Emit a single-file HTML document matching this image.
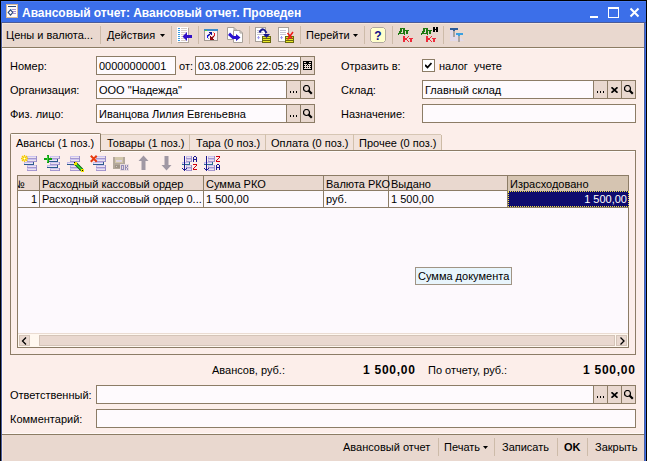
<!DOCTYPE html>
<html><head><meta charset="utf-8">
<style>
*{margin:0;padding:0;box-sizing:border-box}
html,body{width:647px;height:461px;overflow:hidden;background:#FCEEEA}
body{position:relative;font-family:"Liberation Sans",sans-serif;font-size:11px;color:#000}
.a{position:absolute}
.t{position:absolute;white-space:pre;line-height:13px;height:13px}
.fld{position:absolute;border:1px solid #8C7C66;background:#FEFAFD;height:19px}
.btn{position:absolute;border:1px solid #8C7C66;background:#E9D8CF;height:19px;width:15px}
.sep{position:absolute;width:1px;background:#CDBBA9;top:26px;height:18px}
.bsep{position:absolute;width:1px;background:#CDBBA9;top:438px;height:18px}
</style></head><body>
<!-- window frame -->
<div class="a" style="left:0;top:0;width:647px;height:461px;background:#000"></div>
<div class="a" style="left:1px;top:1px;width:645px;height:460px;background:#3C6FE9"></div>
<div class="a" style="left:1px;top:1px;width:645px;height:1px;background:#4A7CF2"></div>
<div class="a" style="left:1px;top:22px;width:645px;height:1px;background:#4A5A98"></div>
<div class="a" style="left:1px;top:22px;width:1px;height:439px;background:#4C5E9E"></div>
<div class="a" style="left:644px;top:22px;width:1px;height:439px;background:#4C5E9E"></div>
<!-- title icon -->
<svg class="a" style="left:6px;top:4px" width="12" height="14" viewBox="0 0 12 14">
<rect x="0.5" y="0.5" width="11" height="13" fill="#FFFAFA" stroke="#D6B898"/>
<rect x="2" y="2" width="8" height="1" fill="#2A4A7A"/>
<rect x="4" y="5" width="3" height="1" fill="#A0E4EC"/>
<rect x="6" y="5" width="4" height="1" fill="#A890D0"/>
<rect x="6" y="7" width="4" height="1" fill="#A890D0"/>
<rect x="7" y="9" width="3" height="1" fill="#A890D0"/>
<path d="M4.5 5.8 L6.8 8.5 L4.5 11.2 L2.2 8.5 Z" fill="none" stroke="#27457A" stroke-width="1.1"/>
</svg>
<div class="t" style="left:22px;top:6px;font-size:12px;font-weight:bold;color:#fff;line-height:14px;height:14px;letter-spacing:-0.03px">Авансовый отчет: Авансовый отчет. Проведен</div>
<!-- title buttons -->
<div class="a" style="left:590px;top:16px;width:8px;height:2px;background:#fff"></div>
<div class="a" style="left:608px;top:7px;width:11px;height:11px;border:1px solid #fff;border-top-width:2px"></div>
<svg class="a" style="left:629px;top:7px" width="11" height="11" viewBox="0 0 11 11"><path d="M1.5 1.5 L9.5 9.5 M9.5 1.5 L1.5 9.5" stroke="#fff" stroke-width="2"/></svg>

<!-- content bg -->
<div class="a" style="left:2px;top:23px;width:642px;height:438px;background:#FCEEEA"></div>
<!-- toolbar -->
<div class="a" style="left:2px;top:23px;width:642px;height:24px;background:#E9D8CF;border-top:1px solid #F6E6DA;border-left:1px solid #F4E6DC"></div>
<div class="a" style="left:2px;top:47px;width:642px;height:1px;background:#8C7C64"></div>
<div class="a" style="left:2px;top:48px;width:642px;height:1px;background:#FFF8F6"></div>
<div class="a" style="left:2px;top:48px;width:1px;height:386px;background:#FFF8F2"></div>
<div class="a" style="left:643px;top:48px;width:1px;height:386px;background:#FFF8F2"></div>

<div class="t" style="left:6px;top:29px">Цены и валюта...</div>
<div class="sep" style="left:100px"></div>
<div class="t" style="left:107px;top:29px">Действия</div>
<svg class="a" style="left:160px;top:34px" width="6" height="4"><path d="M0 0H5L2.5 3Z" fill="#000"/></svg>
<div class="sep" style="left:171px"></div>
<!-- icon1 doc + arrow -->
<svg class="a" style="left:177px;top:27px" width="16" height="16" viewBox="0 0 16 16" shape-rendering="crispEdges">
<rect x="0" y="0" width="11" height="15" fill="#FFFFFF"/>
<rect x="11" y="1" width="1" height="15" fill="#B4A89E"/><rect x="1" y="15" width="11" height="1" fill="#B4A89E"/>
<g fill="#3A9AE0"><rect x="1" y="1" width="2" height="1"/><rect x="1" y="3" width="2" height="1"/><rect x="1" y="5" width="2" height="1"/><rect x="1" y="7" width="2" height="1"/><rect x="1" y="9" width="2" height="1"/><rect x="1" y="11" width="2" height="1"/><rect x="1" y="13" width="2" height="1"/></g>
<g fill="#D8CCC6"><rect x="4" y="1" width="6" height="1"/><rect x="4" y="3" width="6" height="1"/><rect x="4" y="5" width="6" height="1"/><rect x="4" y="7" width="4" height="1"/><rect x="4" y="9" width="2" height="1"/><rect x="4" y="11" width="4" height="1"/><rect x="4" y="13" width="5" height="1"/></g>
<path d="M5.5 9.5 L10 5 V8 H15 V11 H10 V14 Z" fill="#3010C8" shape-rendering="auto"/>
</svg>
<div class="sep" style="left:198px"></div>
<!-- icon2 window refresh -->
<svg class="a" style="left:204px;top:29px" width="14" height="12" viewBox="0 0 14 12" shape-rendering="crispEdges">
<rect x="0" y="0" width="14" height="12" fill="#FBF2F4"/>
<rect x="0" y="0" width="14" height="2" fill="#3C8CCA"/>
<rect x="1" y="1" width="2" height="1" fill="#50D030"/>
<rect x="0" y="2" width="1" height="10" fill="#A49A92"/><rect x="13" y="2" width="1" height="10" fill="#A49A92"/><rect x="0" y="11" width="14" height="1" fill="#A49A92"/>
<path d="M4 3 H8 V7 Z" fill="#10108A"/><path d="M4 7 L6 5" stroke="#10108A" stroke-width="1.2" shape-rendering="auto"/>
<rect x="3" y="6" width="1" height="3" fill="#1818F0"/>
<rect x="4" y="5" width="1" height="1" fill="#5070C0"/><rect x="4" y="9" width="1" height="1" fill="#70A8E0"/>
<rect x="10" y="4" width="1" height="3" fill="#E81818"/><rect x="9" y="3" width="1" height="1" fill="#F0A070"/>
<path d="M6 7 V11 H10 Z" fill="#900A10"/><path d="M8 9 L10 7" stroke="#900A10" stroke-width="1.2" shape-rendering="auto"/>
</svg>
<!-- icon3 two docs arrow -->
<svg class="a" style="left:227px;top:27px" width="17" height="16" viewBox="0 0 17 16">
<path d="M0.5 0.5 H7 L9.5 3 V12.5 H0.5Z" fill="#fff" stroke="#A8A098"/>
<path d="M7 0.5 V3 H9.5" fill="none" stroke="#A8A098"/>
<path d="M6.5 3.5 H13 L15.5 6 V15.5 H6.5Z" fill="#fff" stroke="#A8A098"/>
<path d="M13 3.5 V6 H15.5" fill="none" stroke="#A8A098"/>
<path d="M1 8 L3 5.5 L6.5 9 H9 V7 L13.5 10.5 L9 14 V12 H5.5 Z" fill="#2A12D0"/>
</svg>
<div class="sep" style="left:249px"></div>
<!-- icon4 -->
<svg class="a" style="left:255px;top:27px" width="16" height="16" viewBox="0 0 16 16" shape-rendering="crispEdges">
<rect x="0" y="0" width="11" height="15" fill="#A8A098"/><rect x="1" y="1" width="9" height="13" fill="#fff"/>
<g fill="#C8C4D0"><rect x="2" y="3" width="6" height="1"/><rect x="2" y="5" width="6" height="1"/><rect x="2" y="7" width="6" height="1"/></g>
<path d="M2 10 H5 L3.5 12.5Z" fill="#9C98F0" shape-rendering="auto"/><rect x="3" y="9" width="1" height="1" fill="#9C98F0"/>
<rect x="7" y="9" width="9" height="7" fill="#6A6A10"/>
<g fill="#E8E828"><rect x="8" y="10" width="7" height="1"/><rect x="8" y="12" width="7" height="1"/><rect x="8" y="14" width="7" height="1"/></g>
<path d="M4.5 5.5 Q8 -1 11.5 6" stroke="#1A1A90" stroke-width="2" fill="none" shape-rendering="auto"/>
<path d="M8 7 H15 L11.5 11Z" fill="#1A1A90" shape-rendering="auto"/>
</svg>
<!-- icon5 -->
<svg class="a" style="left:278px;top:27px" width="16" height="16" viewBox="0 0 16 16" shape-rendering="crispEdges">
<rect x="0" y="0" width="11" height="15" fill="#A8A098"/><rect x="1" y="1" width="9" height="13" fill="#fff"/>
<g fill="#C8C4D0"><rect x="2" y="3" width="6" height="1"/><rect x="2" y="5" width="6" height="1"/><rect x="2" y="7" width="6" height="1"/></g>
<path d="M2 10 H5 L3.5 12.5Z" fill="#9C98F0" shape-rendering="auto"/><rect x="3" y="9" width="1" height="1" fill="#9C98F0"/>
<rect x="7" y="9" width="9" height="7" fill="#6A6A10"/>
<g fill="#E8E828"><rect x="8" y="10" width="7" height="1"/><rect x="8" y="12" width="7" height="1"/><rect x="8" y="14" width="7" height="1"/></g>
<path d="M9.5 6 L14 11.5 M15 5 L9.5 12.5" stroke="#F01818" stroke-width="1.5" fill="none" shape-rendering="auto"/>
</svg>
<div class="sep" style="left:300px"></div>
<div class="t" style="left:306px;top:29px">Перейти</div>
<svg class="a" style="left:353px;top:34px" width="6" height="4"><path d="M0 0H5L2.5 3Z" fill="#000"/></svg>
<div class="sep" style="left:364px"></div>
<!-- help -->
<svg class="a" style="left:370px;top:27px" width="16" height="16" viewBox="0 0 16 16">
<path d="M2.5 0.5 H13.5 L15.5 2.5 V13.5 L13.5 15.5 H2.5 L0.5 13.5 V2.5Z" fill="#FFFFCC" stroke="#B0A8A0"/>
<text x="8" y="12.5" font-family="Liberation Sans" font-weight="bold" font-size="12" fill="#10108A" text-anchor="middle">?</text>
</svg>
<div class="sep" style="left:392px"></div>
<svg class="a" style="left:398px;top:26px" width="18" height="16" viewBox="0 0 18 16" shape-rendering="crispEdges">
<g fill="#1E7A12"><rect x="2" y="2" width="5" height="1"/><rect x="2" y="2" width="2" height="4"/><rect x="1" y="5" width="2" height="2"/><rect x="5" y="2" width="2" height="6"/><rect x="0" y="7" width="7" height="1"/><rect x="0" y="8" width="1" height="1"/><rect x="6" y="8" width="1" height="1"/>
<rect x="7" y="4" width="4" height="1"/><rect x="8" y="4" width="2" height="4"/></g>
<g fill="#EE2A3A"><rect x="5" y="10" width="2" height="6"/><rect x="7" y="12" width="2" height="2"/><rect x="9" y="11" width="1" height="1"/><rect x="10" y="10" width="1" height="1"/><rect x="9" y="14" width="1" height="1"/><rect x="10" y="15" width="1" height="1"/>
<rect x="11" y="12" width="4" height="1"/><rect x="12" y="12" width="2" height="4"/></g></svg><svg class="a" style="left:421px;top:26px" width="18" height="16" viewBox="0 0 18 16" shape-rendering="crispEdges">
<g fill="#1E7A12"><rect x="2" y="2" width="5" height="1"/><rect x="2" y="2" width="2" height="4"/><rect x="1" y="5" width="2" height="2"/><rect x="5" y="2" width="2" height="6"/><rect x="0" y="7" width="7" height="1"/><rect x="0" y="8" width="1" height="1"/><rect x="6" y="8" width="1" height="1"/>
<rect x="7" y="4" width="4" height="1"/><rect x="8" y="4" width="2" height="4"/></g>
<g fill="#EE2A3A"><rect x="5" y="10" width="2" height="6"/><rect x="7" y="12" width="2" height="2"/><rect x="9" y="11" width="1" height="1"/><rect x="10" y="10" width="1" height="1"/><rect x="9" y="14" width="1" height="1"/><rect x="10" y="15" width="1" height="1"/>
<rect x="11" y="12" width="4" height="1"/><rect x="12" y="12" width="2" height="4"/></g><g fill="#000"><rect x="12" y="1" width="2" height="5"/><rect x="15" y="1" width="2" height="5"/><rect x="14" y="3" width="1" height="1"/></g></svg>
<div class="sep" style="left:443px"></div>
<svg class="a" style="left:449px;top:27px" width="16" height="16" viewBox="0 0 16 16" shape-rendering="crispEdges">
<path d="M1 1 H6 V6 H8 L15 14 H1Z" fill="#E2DAE8" shape-rendering="auto"/>
<rect x="1" y="1" width="8" height="2" fill="#2C5C98"/><rect x="4" y="3" width="2" height="1" fill="#2C5C98"/>
<rect x="4" y="4" width="2" height="6" fill="#A8A29C"/>
<rect x="7" y="6" width="7" height="2" fill="#3AA0E0"/><rect x="9" y="8" width="2" height="1" fill="#3AA0E0"/>
<rect x="9" y="9" width="2" height="6" fill="#ACA6A2"/>
</svg>

<!-- form labels -->
<div class="t" style="left:10px;top:60px">Номер:</div>
<div class="t" style="left:10px;top:84px">Организация:</div>
<div class="t" style="left:10px;top:108px">Физ. лицо:</div>
<div class="fld" style="left:96px;top:56px;width:80px"></div>
<div class="t" style="left:99px;top:60px">00000000001</div>
<div class="t" style="left:179px;top:60px">от:</div>
<div class="fld" style="left:195px;top:56px;width:120px"></div>
<div class="t" style="left:198px;top:60px">03.08.2006 22:05:29</div>
<div class="btn" style="left:300px;top:56px"></div>
<svg class="a" style="left:303px;top:61px" width="9" height="9" viewBox="0 0 9 9" shape-rendering="crispEdges"><rect x="0" y="0" width="1" height="1" fill="#000"/><rect x="1" y="0" width="1" height="1" fill="#000"/><rect x="2" y="0" width="1" height="1" fill="#000"/><rect x="3" y="0" width="1" height="1" fill="#000"/><rect x="4" y="0" width="1" height="1" fill="#000"/><rect x="5" y="0" width="1" height="1" fill="#000"/><rect x="6" y="0" width="1" height="1" fill="#000"/><rect x="7" y="0" width="1" height="1" fill="#000"/><rect x="8" y="0" width="1" height="1" fill="#000"/><rect x="0" y="1" width="1" height="1" fill="#000"/><rect x="1" y="1" width="1" height="1" fill="#EADBD2"/><rect x="2" y="1" width="1" height="1" fill="#EADBD2"/><rect x="3" y="1" width="1" height="1" fill="#000"/><rect x="4" y="1" width="1" height="1" fill="#000"/><rect x="5" y="1" width="1" height="1" fill="#000"/><rect x="6" y="1" width="1" height="1" fill="#EADBD2"/><rect x="7" y="1" width="1" height="1" fill="#EADBD2"/><rect x="8" y="1" width="1" height="1" fill="#000"/><rect x="0" y="2" width="1" height="1" fill="#000"/><rect x="1" y="2" width="1" height="1" fill="#000"/><rect x="2" y="2" width="1" height="1" fill="#000"/><rect x="3" y="2" width="1" height="1" fill="#000"/><rect x="4" y="2" width="1" height="1" fill="#000"/><rect x="5" y="2" width="1" height="1" fill="#000"/><rect x="6" y="2" width="1" height="1" fill="#000"/><rect x="7" y="2" width="1" height="1" fill="#000"/><rect x="8" y="2" width="1" height="1" fill="#000"/><rect x="0" y="3" width="1" height="1" fill="#000"/><rect x="1" y="3" width="1" height="1" fill="#EADBD2"/><rect x="2" y="3" width="1" height="1" fill="#EADBD2"/><rect x="3" y="3" width="1" height="1" fill="#EADBD2"/><rect x="4" y="3" width="1" height="1" fill="#000"/><rect x="5" y="3" width="1" height="1" fill="#EADBD2"/><rect x="6" y="3" width="1" height="1" fill="#EADBD2"/><rect x="7" y="3" width="1" height="1" fill="#EADBD2"/><rect x="8" y="3" width="1" height="1" fill="#000"/><rect x="0" y="4" width="1" height="1" fill="#000"/><rect x="1" y="4" width="1" height="1" fill="#000"/><rect x="2" y="4" width="1" height="1" fill="#EADBD2"/><rect x="3" y="4" width="1" height="1" fill="#000"/><rect x="4" y="4" width="1" height="1" fill="#EADBD2"/><rect x="5" y="4" width="1" height="1" fill="#000"/><rect x="6" y="4" width="1" height="1" fill="#EADBD2"/><rect x="7" y="4" width="1" height="1" fill="#000"/><rect x="8" y="4" width="1" height="1" fill="#000"/><rect x="0" y="5" width="1" height="1" fill="#000"/><rect x="1" y="5" width="1" height="1" fill="#EADBD2"/><rect x="2" y="5" width="1" height="1" fill="#EADBD2"/><rect x="3" y="5" width="1" height="1" fill="#EADBD2"/><rect x="4" y="5" width="1" height="1" fill="#EADBD2"/><rect x="5" y="5" width="1" height="1" fill="#EADBD2"/><rect x="6" y="5" width="1" height="1" fill="#EADBD2"/><rect x="7" y="5" width="1" height="1" fill="#EADBD2"/><rect x="8" y="5" width="1" height="1" fill="#000"/><rect x="0" y="6" width="1" height="1" fill="#000"/><rect x="1" y="6" width="1" height="1" fill="#000"/><rect x="2" y="6" width="1" height="1" fill="#EADBD2"/><rect x="3" y="6" width="1" height="1" fill="#000"/><rect x="4" y="6" width="1" height="1" fill="#EADBD2"/><rect x="5" y="6" width="1" height="1" fill="#000"/><rect x="6" y="6" width="1" height="1" fill="#EADBD2"/><rect x="7" y="6" width="1" height="1" fill="#000"/><rect x="8" y="6" width="1" height="1" fill="#000"/><rect x="0" y="7" width="1" height="1" fill="#000"/><rect x="1" y="7" width="1" height="1" fill="#EADBD2"/><rect x="2" y="7" width="1" height="1" fill="#EADBD2"/><rect x="3" y="7" width="1" height="1" fill="#EADBD2"/><rect x="4" y="7" width="1" height="1" fill="#EADBD2"/><rect x="5" y="7" width="1" height="1" fill="#EADBD2"/><rect x="6" y="7" width="1" height="1" fill="#EADBD2"/><rect x="7" y="7" width="1" height="1" fill="#EADBD2"/><rect x="8" y="7" width="1" height="1" fill="#000"/><rect x="0" y="8" width="1" height="1" fill="#000"/><rect x="1" y="8" width="1" height="1" fill="#000"/><rect x="2" y="8" width="1" height="1" fill="#000"/><rect x="3" y="8" width="1" height="1" fill="#000"/><rect x="4" y="8" width="1" height="1" fill="#000"/><rect x="5" y="8" width="1" height="1" fill="#000"/><rect x="6" y="8" width="1" height="1" fill="#000"/><rect x="7" y="8" width="1" height="1" fill="#000"/><rect x="8" y="8" width="1" height="1" fill="#000"/></svg>

<div class="fld" style="left:96px;top:80px;width:219px"></div>
<div class="t" style="left:99px;top:84px">ООО "Надежда"</div>
<div class="btn" style="left:286px;top:80px"></div>
<div class="btn" style="left:300px;top:80px"></div>
<div class="fld" style="left:96px;top:104px;width:219px"></div>
<div class="t" style="left:99px;top:108px">Иванцова Лилия Евгеньевна</div>
<div class="btn" style="left:286px;top:104px"></div>
<div class="btn" style="left:300px;top:104px"></div>

<div class="t" style="left:341px;top:60px">Отразить в:</div>
<div class="a" style="left:422px;top:59px;width:13px;height:13px;border:1px solid #8C7C66;background:#fff"></div>
<svg class="a" style="left:425px;top:62px" width="7" height="7" viewBox="0 0 7 7"><path d="M0 3 L2.5 5.5 L6.5 1" stroke="#000" stroke-width="1.8" fill="none"/></svg>
<div class="t" style="left:439px;top:60px">налог  учете</div>
<div class="t" style="left:341px;top:84px">Склад:</div>
<div class="fld" style="left:422px;top:80px;width:214px"></div>
<div class="t" style="left:425px;top:84px">Главный склад</div>
<div class="btn" style="left:593px;top:80px"></div>
<div class="btn" style="left:607px;top:80px"></div>
<div class="btn" style="left:621px;top:80px"></div>
<div class="t" style="left:341px;top:108px">Назначение:</div>
<div class="fld" style="left:422px;top:104px;width:214px"></div>



<!-- button glyphs -->
<svg class="a" style="left:290px;top:91px" width="8" height="2"><rect x="0" y="0" width="1" height="2"/><rect x="3" y="0" width="1" height="2"/><rect x="6" y="0" width="1" height="2"/></svg><svg class="a" style="left:303px;top:85px" width="10" height="10" viewBox="0 0 10 10"><circle cx="3.5" cy="3.5" r="3" fill="none" stroke="#000" stroke-width="1.2"/><path d="M5.5 5.5 L8.8 8.8" stroke="#000" stroke-width="2.2"/></svg><svg class="a" style="left:290px;top:115px" width="8" height="2"><rect x="0" y="0" width="1" height="2"/><rect x="3" y="0" width="1" height="2"/><rect x="6" y="0" width="1" height="2"/></svg><svg class="a" style="left:303px;top:109px" width="10" height="10" viewBox="0 0 10 10"><circle cx="3.5" cy="3.5" r="3" fill="none" stroke="#000" stroke-width="1.2"/><path d="M5.5 5.5 L8.8 8.8" stroke="#000" stroke-width="2.2"/></svg><svg class="a" style="left:597px;top:91px" width="8" height="2"><rect x="0" y="0" width="1" height="2"/><rect x="3" y="0" width="1" height="2"/><rect x="6" y="0" width="1" height="2"/></svg><svg class="a" style="left:611px;top:87px" width="7" height="6" viewBox="0 0 7 6"><path d="M0.5 0.3 L6.5 5.7 M6.5 0.3 L0.5 5.7" stroke="#000" stroke-width="1.7"/></svg><svg class="a" style="left:624px;top:85px" width="10" height="10" viewBox="0 0 10 10"><circle cx="3.5" cy="3.5" r="3" fill="none" stroke="#000" stroke-width="1.2"/><path d="M5.5 5.5 L8.8 8.8" stroke="#000" stroke-width="2.2"/></svg>
<!-- tabs -->
<div class="a" style="left:10px;top:150px;width:626px;height:205px;border:1px solid #8C7C66;background:#FCEEEA"></div>
<div class="a" style="left:11px;top:151px;width:624px;height:1px;background:#FFFAF8"></div>
<div class="a" style="left:100px;top:134px;width:342px;height:16px;background:#F2E3DB;border-top:1px solid #D6C6B4"></div>
<div class="a" style="left:189px;top:134px;width:1px;height:16px;background:#D2C0AC"></div>
<div class="a" style="left:265px;top:134px;width:1px;height:16px;background:#D2C0AC"></div>
<div class="a" style="left:353px;top:134px;width:1px;height:16px;background:#D2C0AC"></div>
<div class="a" style="left:441px;top:135px;width:1px;height:15px;background:#CDBBA6"></div>
<div class="a" style="left:441px;top:134px;width:1px;height:1px;background:#FCEEEA"></div>
<div class="a" style="left:10px;top:133px;width:91px;height:19px;border:1px solid #8C7C66;border-bottom:none;border-radius:2px 2px 0 0;background:#FCEEEA"></div>
<div class="a" style="left:11px;top:134px;width:89px;height:1px;background:#FFFAF8"></div>
<div class="a" style="left:100px;top:134px;width:1px;height:17px;background:#8C7C66"></div>
<div class="t" style="left:16px;top:137px">Авансы (1 поз.)</div>
<div class="t" style="left:107px;top:137px">Товары (1 поз.)</div>
<div class="t" style="left:196px;top:137px">Тара (0 поз.)</div>
<div class="t" style="left:271px;top:137px">Оплата (0 поз.)</div>
<div class="t" style="left:359px;top:137px">Прочее (0 поз.)</div>

<!-- inner toolbar icons -->
<svg class="a" style="left:19px;top:153px" width="20" height="20" viewBox="0 0 20 20" shape-rendering="crispEdges"><rect x="8" y="3" width="10" height="3" fill="#BDB2E2"/><rect x="8" y="3" width="10" height="1" fill="#CCC4F0"/><rect x="9" y="4" width="8" height="1" fill="#ECE2EE"/><rect x="8" y="5" width="10" height="1" fill="#A698D0"/><rect x="17" y="3" width="1" height="3" fill="#9A8EC8"/><rect x="8" y="6" width="10" height="3" fill="#BDB2E2"/><rect x="8" y="6" width="10" height="1" fill="#CCC4F0"/><rect x="9" y="7" width="8" height="1" fill="#ECE2EE"/><rect x="8" y="8" width="10" height="1" fill="#A698D0"/><rect x="17" y="6" width="1" height="3" fill="#9A8EC8"/><rect x="5" y="9" width="10" height="3" fill="#C4BCEC"/><rect x="6" y="10" width="8" height="1" fill="#ECE6F6"/><rect x="5" y="11" width="10" height="1" fill="#2C5A8C"/><rect x="14" y="9" width="1" height="3" fill="#2C5A8C"/><rect x="8" y="12" width="10" height="3" fill="#BDB2E2"/><rect x="8" y="12" width="10" height="1" fill="#CCC4F0"/><rect x="9" y="13" width="8" height="1" fill="#ECE2EE"/><rect x="8" y="14" width="10" height="1" fill="#A698D0"/><rect x="17" y="12" width="1" height="3" fill="#9A8EC8"/><rect x="8" y="15" width="10" height="3" fill="#BDB2E2"/><rect x="8" y="15" width="10" height="1" fill="#CCC4F0"/><rect x="9" y="16" width="8" height="1" fill="#ECE2EE"/><rect x="8" y="17" width="10" height="1" fill="#A698D0"/><rect x="17" y="15" width="1" height="3" fill="#9A8EC8"/><path d="M5.5 2 V9 M2 5.5 H9 M3 3 L8 8 M8 3 L3 8" stroke="#F4C800" stroke-width="1.3" shape-rendering="auto"/><path d="M5.5 3.5 V7.5 M3.5 5.5 H7.5" stroke="#FFF060" stroke-width="1" shape-rendering="auto"/><rect x="5" y="5" width="1" height="1" fill="#fff"/></svg>
<svg class="a" style="left:42px;top:153px" width="20" height="20" viewBox="0 0 20 20" shape-rendering="crispEdges"><rect x="8" y="3" width="10" height="3" fill="#BDB2E2"/><rect x="8" y="3" width="10" height="1" fill="#CCC4F0"/><rect x="9" y="4" width="8" height="1" fill="#ECE2EE"/><rect x="8" y="5" width="10" height="1" fill="#A698D0"/><rect x="17" y="3" width="1" height="3" fill="#9A8EC8"/><rect x="7" y="6" width="9" height="3" fill="#C4BCEC"/><rect x="8" y="7" width="7" height="1" fill="#ECE6F6"/><rect x="7" y="8" width="9" height="1" fill="#2C5A8C"/><rect x="15" y="6" width="1" height="3" fill="#2C5A8C"/><rect x="8" y="9" width="10" height="3" fill="#BDB2E2"/><rect x="8" y="9" width="10" height="1" fill="#CCC4F0"/><rect x="9" y="10" width="8" height="1" fill="#ECE2EE"/><rect x="8" y="11" width="10" height="1" fill="#A698D0"/><rect x="17" y="9" width="1" height="3" fill="#9A8EC8"/><rect x="5" y="12" width="11" height="3" fill="#C4BCEC"/><rect x="6" y="13" width="9" height="1" fill="#ECE6F6"/><rect x="5" y="14" width="11" height="1" fill="#2C5A8C"/><rect x="15" y="12" width="1" height="3" fill="#2C5A8C"/><rect x="8" y="15" width="10" height="3" fill="#BDB2E2"/><rect x="8" y="15" width="10" height="1" fill="#CCC4F0"/><rect x="9" y="16" width="8" height="1" fill="#ECE2EE"/><rect x="8" y="17" width="10" height="1" fill="#A698D0"/><rect x="17" y="15" width="1" height="3" fill="#9A8EC8"/><rect x="5" y="2" width="2" height="8" fill="#10A010"/><rect x="2" y="5" width="8" height="2" fill="#10A010"/><rect x="5" y="3" width="1" height="6" fill="#40D040"/></svg>
<svg class="a" style="left:65px;top:153px" width="20" height="20" viewBox="0 0 20 20" shape-rendering="crispEdges"><rect x="5" y="3" width="10" height="3" fill="#BDB2E2"/><rect x="5" y="3" width="10" height="1" fill="#CCC4F0"/><rect x="6" y="4" width="8" height="1" fill="#ECE2EE"/><rect x="5" y="5" width="10" height="1" fill="#A698D0"/><rect x="14" y="3" width="1" height="3" fill="#9A8EC8"/><rect x="5" y="6" width="10" height="3" fill="#BDB2E2"/><rect x="5" y="6" width="10" height="1" fill="#CCC4F0"/><rect x="6" y="7" width="8" height="1" fill="#ECE2EE"/><rect x="5" y="8" width="10" height="1" fill="#A698D0"/><rect x="14" y="6" width="1" height="3" fill="#9A8EC8"/><rect x="2" y="9" width="8" height="3" fill="#C4BCEC"/><rect x="3" y="10" width="6" height="1" fill="#ECE6F6"/><rect x="2" y="11" width="8" height="1" fill="#2C5A8C"/><rect x="9" y="9" width="1" height="3" fill="#2C5A8C"/><rect x="5" y="12" width="10" height="3" fill="#BDB2E2"/><rect x="5" y="12" width="10" height="1" fill="#CCC4F0"/><rect x="6" y="13" width="8" height="1" fill="#ECE2EE"/><rect x="5" y="14" width="10" height="1" fill="#A698D0"/><rect x="14" y="12" width="1" height="3" fill="#9A8EC8"/><rect x="5" y="15" width="10" height="3" fill="#BDB2E2"/><rect x="5" y="15" width="10" height="1" fill="#CCC4F0"/><rect x="6" y="16" width="8" height="1" fill="#ECE2EE"/><rect x="5" y="17" width="10" height="1" fill="#A698D0"/><rect x="14" y="15" width="1" height="3" fill="#9A8EC8"/><path d="M10.5 10.5 L17 17" stroke="#106010" stroke-width="3.4" shape-rendering="auto"/><path d="M10.5 10.5 L17 17" stroke="#30E030" stroke-width="1.6" shape-rendering="auto"/><rect x="9" y="9" width="3" height="3" fill="#F0E000"/><rect x="9" y="9" width="1" height="1" fill="#000"/><rect x="16" y="16" width="3" height="3" fill="#F0E000"/><rect x="17" y="17" width="1" height="1" fill="#000"/></svg>
<svg class="a" style="left:88px;top:153px" width="20" height="20" viewBox="0 0 20 20" shape-rendering="crispEdges"><rect x="8" y="3" width="10" height="3" fill="#BDB2E2"/><rect x="8" y="3" width="10" height="1" fill="#CCC4F0"/><rect x="9" y="4" width="8" height="1" fill="#ECE2EE"/><rect x="8" y="5" width="10" height="1" fill="#A698D0"/><rect x="17" y="3" width="1" height="3" fill="#9A8EC8"/><rect x="8" y="6" width="10" height="3" fill="#BDB2E2"/><rect x="8" y="6" width="10" height="1" fill="#CCC4F0"/><rect x="9" y="7" width="8" height="1" fill="#ECE2EE"/><rect x="8" y="8" width="10" height="1" fill="#A698D0"/><rect x="17" y="6" width="1" height="3" fill="#9A8EC8"/><rect x="5" y="9" width="11" height="3" fill="#C4BCEC"/><rect x="6" y="10" width="9" height="1" fill="#ECE6F6"/><rect x="5" y="11" width="11" height="1" fill="#2C5A8C"/><rect x="15" y="9" width="1" height="3" fill="#2C5A8C"/><rect x="8" y="12" width="10" height="3" fill="#BDB2E2"/><rect x="8" y="12" width="10" height="1" fill="#CCC4F0"/><rect x="9" y="13" width="8" height="1" fill="#ECE2EE"/><rect x="8" y="14" width="10" height="1" fill="#A698D0"/><rect x="17" y="12" width="1" height="3" fill="#9A8EC8"/><rect x="8" y="15" width="10" height="3" fill="#BDB2E2"/><rect x="8" y="15" width="10" height="1" fill="#CCC4F0"/><rect x="9" y="16" width="8" height="1" fill="#ECE2EE"/><rect x="8" y="17" width="10" height="1" fill="#A698D0"/><rect x="17" y="15" width="1" height="3" fill="#9A8EC8"/><path d="M2.8 2.8 L8.7 8.7 M8.7 2.8 L2.8 8.7" stroke="#E83A10" stroke-width="2" shape-rendering="auto"/></svg>
<svg class="a" style="left:113px;top:157px" width="16" height="14" viewBox="0 0 16 14" shape-rendering="crispEdges">
<rect x="0" y="0" width="12" height="12" fill="#B4A89C"/>
<rect x="2" y="0" width="8" height="6" fill="#D2C6AA"/>
<rect x="3" y="3" width="6" height="2" fill="#DCD2E0"/>
<rect x="2" y="8" width="5" height="3" fill="#A09488"/><rect x="3" y="9" width="1" height="1" fill="#D0C8C0"/>
<rect x="7" y="7" width="9" height="7" fill="#E6DADC"/>
<g fill="#948CB8"><rect x="8" y="8" width="3" height="1"/><rect x="8" y="12" width="3" height="1"/><rect x="8" y="8" width="1" height="5"/><rect x="10" y="8" width="1" height="5"/>
<rect x="12" y="8" width="1" height="5"/><rect x="13" y="10" width="1" height="1"/><rect x="14" y="8" width="1" height="2"/><rect x="14" y="11" width="1" height="2"/></g>
</svg>
<svg class="a" style="left:138px;top:155px" width="11" height="16" viewBox="0 0 11 16">
<path d="M5.5 0.5 L10.5 6 H7.5 V15 H3.5 V6 H0.5Z" fill="#A098A4"/>
</svg>
<svg class="a" style="left:161px;top:155px" width="11" height="16" viewBox="0 0 11 16">
<path d="M5.5 15.5 L10.5 10 H7.5 V1 H3.5 V10 H0.5Z" fill="#A098A4"/>
</svg>
<svg class="a" style="left:180px;top:153px" width="20" height="20" viewBox="0 0 20 20" shape-rendering="crispEdges"><rect x="6" y="3" width="6" height="3" fill="#BDB2E2"/><rect x="6" y="3" width="6" height="1" fill="#CCC4F0"/><rect x="7" y="4" width="4" height="1" fill="#ECE2EE"/><rect x="6" y="5" width="6" height="1" fill="#A698D0"/><rect x="11" y="3" width="1" height="3" fill="#9A8EC8"/><rect x="6" y="6" width="6" height="3" fill="#BDB2E2"/><rect x="6" y="6" width="6" height="1" fill="#CCC4F0"/><rect x="7" y="7" width="4" height="1" fill="#ECE2EE"/><rect x="6" y="8" width="6" height="1" fill="#A698D0"/><rect x="11" y="6" width="1" height="3" fill="#9A8EC8"/><rect x="2" y="9" width="8" height="3" fill="#C4BCEC"/><rect x="3" y="10" width="6" height="1" fill="#ECE6F6"/><rect x="2" y="11" width="8" height="1" fill="#2C6A8C"/><rect x="9" y="9" width="1" height="3" fill="#2C6A8C"/><rect x="6" y="12" width="6" height="3" fill="#BDB2E2"/><rect x="6" y="12" width="6" height="1" fill="#CCC4F0"/><rect x="7" y="13" width="4" height="1" fill="#ECE2EE"/><rect x="6" y="14" width="6" height="1" fill="#A698D0"/><rect x="11" y="12" width="1" height="3" fill="#9A8EC8"/><rect x="6" y="15" width="6" height="3" fill="#BDB2E2"/><rect x="6" y="15" width="6" height="1" fill="#CCC4F0"/><rect x="7" y="16" width="4" height="1" fill="#ECE2EE"/><rect x="6" y="17" width="6" height="1" fill="#A698D0"/><rect x="11" y="15" width="1" height="3" fill="#9A8EC8"/><rect x="4" y="3" width="1" height="15" fill="#1A1890"/><rect x="2" y="15" width="1" height="1" fill="#1A1890"/><rect x="3" y="16" width="1" height="1" fill="#1A1890"/><rect x="5" y="16" width="1" height="1" fill="#1A1890"/><rect x="6" y="15" width="1" height="1" fill="#1A1890"/><rect x="14" y="3" width="1" height="1" fill="#1A1890"/><rect x="15" y="3" width="1" height="1" fill="#1A1890"/><rect x="13" y="4" width="1" height="1" fill="#1A1890"/><rect x="16" y="4" width="1" height="1" fill="#1A1890"/><rect x="13" y="5" width="1" height="1" fill="#1A1890"/><rect x="16" y="5" width="1" height="1" fill="#1A1890"/><rect x="13" y="6" width="1" height="1" fill="#1A1890"/><rect x="14" y="6" width="1" height="1" fill="#1A1890"/><rect x="15" y="6" width="1" height="1" fill="#1A1890"/><rect x="16" y="6" width="1" height="1" fill="#1A1890"/><rect x="13" y="7" width="1" height="1" fill="#1A1890"/><rect x="16" y="7" width="1" height="1" fill="#1A1890"/><rect x="13" y="8" width="1" height="1" fill="#1A1890"/><rect x="16" y="8" width="1" height="1" fill="#1A1890"/><rect x="13" y="11" width="1" height="1" fill="#D00010"/><rect x="14" y="11" width="1" height="1" fill="#D00010"/><rect x="15" y="11" width="1" height="1" fill="#D00010"/><rect x="16" y="11" width="1" height="1" fill="#D00010"/><rect x="16" y="12" width="1" height="1" fill="#D00010"/><rect x="15" y="13" width="1" height="1" fill="#D00010"/><rect x="14" y="14" width="1" height="1" fill="#D00010"/><rect x="13" y="15" width="1" height="1" fill="#D00010"/><rect x="13" y="16" width="1" height="1" fill="#D00010"/><rect x="14" y="16" width="1" height="1" fill="#D00010"/><rect x="15" y="16" width="1" height="1" fill="#D00010"/><rect x="16" y="16" width="1" height="1" fill="#D00010"/></svg>
<svg class="a" style="left:201px;top:153px" width="20" height="20" viewBox="0 0 20 20" shape-rendering="crispEdges"><rect x="7" y="3" width="7" height="3" fill="#BDB2E2"/><rect x="7" y="3" width="7" height="1" fill="#CCC4F0"/><rect x="8" y="4" width="5" height="1" fill="#ECE2EE"/><rect x="7" y="5" width="7" height="1" fill="#A698D0"/><rect x="13" y="3" width="1" height="3" fill="#9A8EC8"/><rect x="7" y="6" width="7" height="3" fill="#BDB2E2"/><rect x="7" y="6" width="7" height="1" fill="#CCC4F0"/><rect x="8" y="7" width="5" height="1" fill="#ECE2EE"/><rect x="7" y="8" width="7" height="1" fill="#A698D0"/><rect x="13" y="6" width="1" height="3" fill="#9A8EC8"/><rect x="3" y="9" width="9" height="3" fill="#C4BCEC"/><rect x="4" y="10" width="7" height="1" fill="#ECE6F6"/><rect x="3" y="11" width="9" height="1" fill="#2C6A8C"/><rect x="11" y="9" width="1" height="3" fill="#2C6A8C"/><rect x="7" y="12" width="7" height="3" fill="#BDB2E2"/><rect x="7" y="12" width="7" height="1" fill="#CCC4F0"/><rect x="8" y="13" width="5" height="1" fill="#ECE2EE"/><rect x="7" y="14" width="7" height="1" fill="#A698D0"/><rect x="13" y="12" width="1" height="3" fill="#9A8EC8"/><rect x="7" y="15" width="7" height="3" fill="#BDB2E2"/><rect x="7" y="15" width="7" height="1" fill="#CCC4F0"/><rect x="8" y="16" width="5" height="1" fill="#ECE2EE"/><rect x="7" y="17" width="7" height="1" fill="#A698D0"/><rect x="13" y="15" width="1" height="3" fill="#9A8EC8"/><rect x="5" y="3" width="1" height="15" fill="#1A1890"/><rect x="3" y="15" width="1" height="1" fill="#1A1890"/><rect x="4" y="16" width="1" height="1" fill="#1A1890"/><rect x="6" y="16" width="1" height="1" fill="#1A1890"/><rect x="7" y="15" width="1" height="1" fill="#1A1890"/><rect x="15" y="3" width="1" height="1" fill="#D00010"/><rect x="16" y="3" width="1" height="1" fill="#D00010"/><rect x="17" y="3" width="1" height="1" fill="#D00010"/><rect x="18" y="3" width="1" height="1" fill="#D00010"/><rect x="18" y="4" width="1" height="1" fill="#D00010"/><rect x="17" y="5" width="1" height="1" fill="#D00010"/><rect x="16" y="6" width="1" height="1" fill="#D00010"/><rect x="15" y="7" width="1" height="1" fill="#D00010"/><rect x="15" y="8" width="1" height="1" fill="#D00010"/><rect x="16" y="8" width="1" height="1" fill="#D00010"/><rect x="17" y="8" width="1" height="1" fill="#D00010"/><rect x="18" y="8" width="1" height="1" fill="#D00010"/><rect x="16" y="11" width="1" height="1" fill="#1A1890"/><rect x="17" y="11" width="1" height="1" fill="#1A1890"/><rect x="15" y="12" width="1" height="1" fill="#1A1890"/><rect x="18" y="12" width="1" height="1" fill="#1A1890"/><rect x="15" y="13" width="1" height="1" fill="#1A1890"/><rect x="18" y="13" width="1" height="1" fill="#1A1890"/><rect x="15" y="14" width="1" height="1" fill="#1A1890"/><rect x="16" y="14" width="1" height="1" fill="#1A1890"/><rect x="17" y="14" width="1" height="1" fill="#1A1890"/><rect x="18" y="14" width="1" height="1" fill="#1A1890"/><rect x="15" y="15" width="1" height="1" fill="#1A1890"/><rect x="18" y="15" width="1" height="1" fill="#1A1890"/><rect x="15" y="16" width="1" height="1" fill="#1A1890"/><rect x="18" y="16" width="1" height="1" fill="#1A1890"/></svg>

<!-- table -->
<div class="a" style="left:17px;top:175px;width:612px;height:173px;border:1px solid #8C7C66;background:#FDF9FD"></div>
<div class="a" style="left:18px;top:176px;width:610px;height:14px;background:#E9D8CF"></div>
<div class="a" style="left:508px;top:176px;width:120px;height:14px;background:#D5C4B1"></div>
<div class="a" style="left:18px;top:190px;width:610px;height:1px;background:#8C7C66"></div>
<div class="a" style="left:18px;top:207px;width:610px;height:1px;background:#8C7C66"></div>
<div class="a" style="left:39px;top:176px;width:1px;height:31px;background:#8C7C66"></div>
<div class="a" style="left:203px;top:176px;width:1px;height:31px;background:#8C7C66"></div>
<div class="a" style="left:323px;top:176px;width:1px;height:31px;background:#8C7C66"></div>
<div class="a" style="left:388px;top:176px;width:1px;height:31px;background:#8C7C66"></div>
<div class="a" style="left:507px;top:176px;width:1px;height:31px;background:#8C7C66"></div>
<div class="t" style="left:18px;top:178px;width:21px;overflow:hidden"><span style="position:relative;left:-5px">№</span></div>
<div class="t" style="left:42px;top:178px">Расходный кассовый ордер</div>
<div class="t" style="left:206px;top:178px">Сумма РКО</div>
<div class="t" style="left:326px;top:178px">Валюта РКО</div>
<div class="t" style="left:391px;top:178px">Выдано</div>
<div class="t" style="left:510px;top:178px">Израсходовано</div>
<div class="t" style="left:31px;top:193px">1</div>
<div class="t" style="left:42px;top:193px">Расходный кассовый ордер 0...</div>
<div class="t" style="left:206px;top:193px">1 500,00</div>
<div class="t" style="left:326px;top:193px">руб.</div>
<div class="t" style="left:391px;top:193px">1 500,00</div>
<div class="a" style="left:508px;top:190px;width:120px;height:1px;background:#D5C4B1"></div>
<div class="a" style="left:508px;top:191px;width:121px;height:16px;background:#0E0B6E;outline:1px dotted #F0E040;outline-offset:-1px"></div>
<div class="t" style="left:508px;top:193px;width:119px;text-align:right;color:#fff">1 500,00</div>
<!-- tooltip -->
<div class="a" style="left:415px;top:267px;width:97px;height:18px;border:1px solid #A09484;background:#E8F5FC"></div>
<div class="t" style="left:418px;top:270px">Сумма документа</div>
<!-- scrollbar -->
<div class="a" style="left:18px;top:333px;width:610px;height:14px;background:#FFF8F0;border-top:1px solid #EADCD2"></div>
<div class="a" style="left:19px;top:335px;width:11px;height:11px;background:#E9D8CF;border:1px solid #D4C4B8"></div>
<svg class="a" style="left:21px;top:337px" width="7" height="8" viewBox="0 0 7 8"><path d="M5 0.5 L1.5 4 L5 7.5" stroke="#000" stroke-width="1.3" fill="none"/></svg>
<div class="a" style="left:39px;top:335px;width:576px;height:11px;background:#E9D8CF;border:1px solid #D4C4B8"></div>
<div class="a" style="left:616px;top:335px;width:11px;height:11px;background:#E9D8CF;border:1px solid #D4C4B8"></div>
<svg class="a" style="left:619px;top:337px" width="7" height="8" viewBox="0 0 7 8"><path d="M1.5 0.5 L5 4 L1.5 7.5" stroke="#000" stroke-width="1.3" fill="none"/></svg>

<!-- totals -->
<div class="t" style="left:212px;top:364px">Авансов, руб.:</div>
<div class="t" style="left:363px;top:364px;font-weight:bold;font-size:12px;letter-spacing:0.75px">1 500,00</div>
<div class="t" style="left:428px;top:364px">По отчету, руб.:</div>
<div class="t" style="left:583px;top:364px;font-weight:bold;font-size:12px;letter-spacing:0.75px">1 500,00</div>

<!-- bottom fields -->
<div class="t" style="left:10px;top:389px">Ответственный:</div>
<div class="fld" style="left:96px;top:385px;width:540px"></div>
<div class="btn" style="left:593px;top:385px"></div>
<div class="btn" style="left:607px;top:385px"></div>
<div class="btn" style="left:621px;top:385px"></div>
<svg class="a" style="left:597px;top:396px" width="8" height="2"><rect x="0" y="0" width="1" height="2"/><rect x="3" y="0" width="1" height="2"/><rect x="6" y="0" width="1" height="2"/></svg><svg class="a" style="left:611px;top:392px" width="7" height="6" viewBox="0 0 7 6"><path d="M0.5 0.3 L6.5 5.7 M6.5 0.3 L0.5 5.7" stroke="#000" stroke-width="1.7"/></svg><svg class="a" style="left:624px;top:390px" width="10" height="10" viewBox="0 0 10 10"><circle cx="3.5" cy="3.5" r="3" fill="none" stroke="#000" stroke-width="1.2"/><path d="M5.5 5.5 L8.8 8.8" stroke="#000" stroke-width="2.2"/></svg>
<div class="t" style="left:10px;top:413px">Комментарий:</div>
<div class="fld" style="left:96px;top:409px;width:540px"></div>

<!-- bottom toolbar -->
<div class="a" style="left:2px;top:433px;width:642px;height:1px;background:#FFF8F6"></div>
<div class="a" style="left:2px;top:434px;width:642px;height:1px;background:#8C7C64"></div>
<div class="a" style="left:2px;top:435px;width:642px;height:26px;background:#E9D8CF;border-left:1px solid #F4E6DC"></div>
<div class="t" style="left:343px;top:441px">Авансовый отчет</div>
<div class="bsep" style="left:438px"></div>
<div class="t" style="left:444px;top:441px">Печать</div>
<svg class="a" style="left:483px;top:446px" width="6" height="4"><path d="M0 0H5L2.5 3Z" fill="#000"/></svg>
<div class="bsep" style="left:494px"></div>
<div class="t" style="left:502px;top:441px">Записать</div>
<div class="bsep" style="left:557px"></div>
<div class="t" style="left:564px;top:441px;font-weight:bold">OK</div>
<div class="bsep" style="left:587px"></div>
<div class="t" style="left:595px;top:441px">Закрыть</div>
</body></html>
